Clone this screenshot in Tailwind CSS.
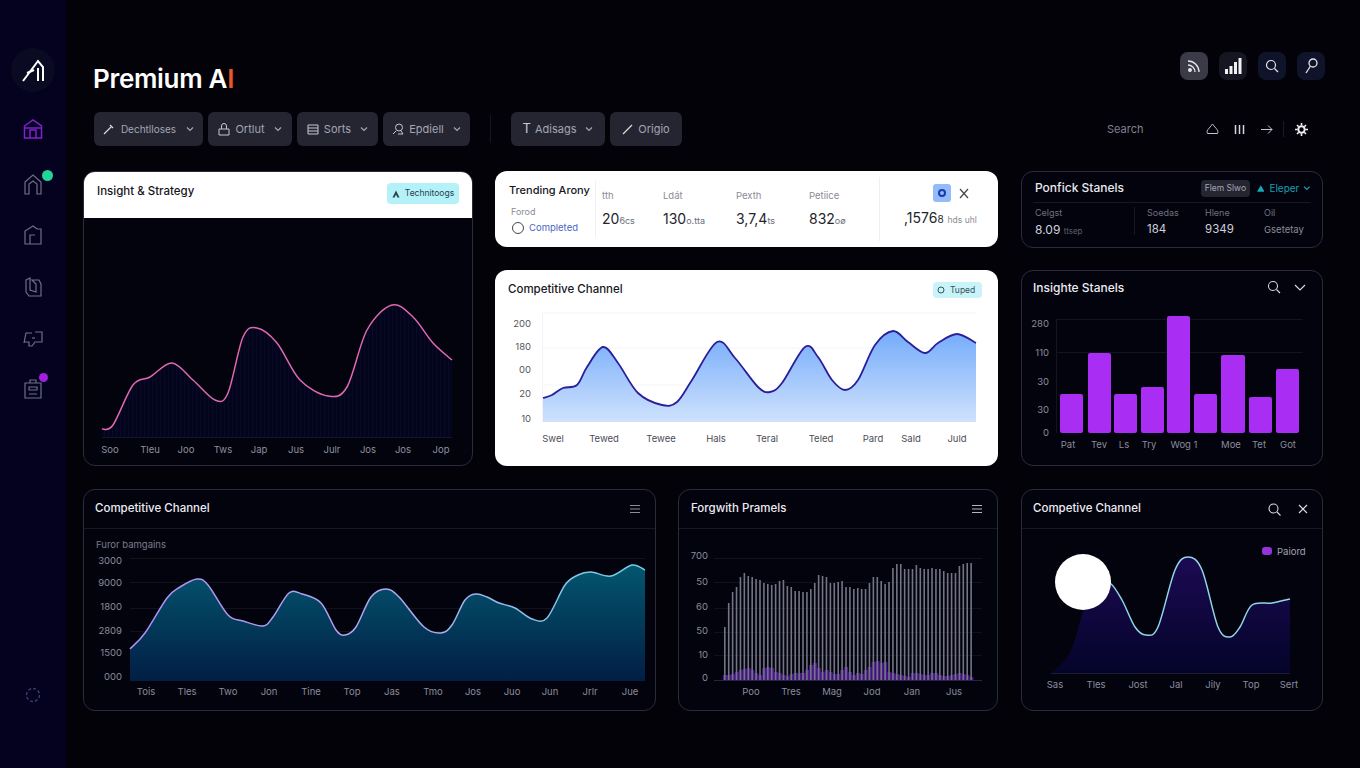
<!DOCTYPE html>
<html lang="en">
<head>
<meta charset="UTF-8">
<title>Premium AI</title>
<script src="https://cdn.jsdelivr.net/npm/@tailwindcss/browser@4"></script>
</head>
<body class="bg-[#020208] text-white [font-family:Inter,sans-serif] overflow-hidden">
<div class="flex h-[768px] w-[1360px]">

  <!-- Sidebar -->
  <aside class="w-[66px] shrink-0 h-full bg-[#04021f] flex flex-col items-center pt-[48px]">
    <div class="w-[44px] h-[44px] rounded-full bg-[#0a0a22] flex items-center justify-center">
      <svg class="w-[22px] h-[23px]" viewBox="0 0 22 23" fill="none" stroke="#fff" stroke-width="2"><path d="M1 22 L16 2 L21 8 V22"/><path d="M5 14 L12 11"/><path d="M16 9 V22"/></svg>
    </div>
    <svg class="w-[20px] h-[22px] mt-[26px]" viewBox="0 0 20 22" fill="none" stroke="#7e22ce" stroke-width="1.5"><path d="M1.5 8 L10 2 L18.500 8 V20 H1.500 Z"/><path d="M1.500 10 H18.500"/><path d="M7 20 V12 H13 V20"/></svg>
    <div class="relative mt-[33px]">
      <svg class="w-[20px] h-[22px] block" viewBox="0 0 20 22" fill="none" stroke="#6f7088" stroke-width="1.2"><path d="M2 21 V9 L10 2 L18 9 V21 H14 V11 L10 8 L6 11 V21 Z"/></svg>
      <span class="absolute -top-[3px] -right-[10px] w-[11px] h-[11px] rounded-full bg-[#22d39a]"></span>
    </div>
    <svg class="w-[20px] h-[22px] mt-[29px]" viewBox="0 0 20 22" fill="none" stroke="#6f7088" stroke-width="1.2"><path d="M2 20 V7 L10 2 L14 5 H18 V20 Z"/><path d="M7 20 V11 H12"/></svg>
    <svg class="w-[20px] h-[22px] mt-[30px]" viewBox="0 0 20 22" fill="none" stroke="#6f7088" stroke-width="1.2"><path d="M3 4 L7 2 V14 L13 16 V8 L9 4 H16 L18 8 V20 H6 L3 16 Z"/></svg>
    <svg class="w-[20px] h-[22px] mt-[29px]" viewBox="0 0 20 22" fill="none" stroke="#6f7088" stroke-width="1.2"><path d="M1 16 L3 6 H9 M12 5 H19 V15 H12 L9 19 H6 V15 H1"/><path d="M9 11 H12"/></svg>
    <div class="relative mt-[28px]">
      <svg class="w-[20px] h-[22px] block" viewBox="0 0 20 22" fill="none" stroke="#6f7088" stroke-width="1.2"><path d="M2 6 H18 V21 H2 Z"/><path d="M7 6 V3 H13 V6 M6 10 H14 V13 H6 Z M6 17 H14"/></svg>
      <span class="absolute -top-[4px] -right-[5px] w-[9px] h-[9px] rounded-full bg-[#a21fe0]"></span>
    </div>
    <svg class="w-[16px] h-[16px] mt-auto mb-[65px]" viewBox="0 0 16 16" fill="none" stroke="#3b3f6b" stroke-width="1.400" stroke-dasharray="3 2"><circle cx="8" cy="8" r="6.500"/></svg>
  </aside>

  <!-- Main -->
  <main class="flex-1 pl-[17px] pr-[35px] pt-[52px]">

    <!-- Title row -->
    <div class="flex justify-between items-start h-[36px]">
      <h1 class="ml-[10px] mt-[9px] text-[26px] leading-[36px] font-semibold tracking-[-0.3px]">Premium A<span class="text-[#e8562a]">I</span></h1>
      <div class="flex gap-[11px]">
        <div class="w-[28px] h-[28px] rounded-lg bg-[#3a3b47] flex items-center justify-center">
          <svg class="w-[14px] h-[14px]" viewBox="0 0 14 14" fill="none" stroke="#e4e4ea" stroke-width="1.300"><path d="M1 2 C7 2 12 7 12 13"/><path d="M1 6 C4.500 6 8 9 8 13"/><circle cx="3" cy="11" r="1.300" fill="#e4e4ea"/></svg>
        </div>
        <div class="w-[28px] h-[28px] rounded-lg bg-[#161622] flex items-center justify-center">
          <svg class="w-[17px] h-[16px]" viewBox="0 0 17 16" fill="#f1f1f4"><rect x="0" y="11" width="3" height="5"/><rect x="4.500" y="8" width="3" height="8"/><rect x="9" y="4" width="3" height="12"/><rect x="13.500" y="0" width="3" height="16"/></svg>
        </div>
        <div class="w-[28px] h-[28px] rounded-lg bg-[#10142a] flex items-center justify-center">
          <svg class="w-[14px] h-[14px]" viewBox="0 0 14 14" fill="none" stroke="#e4e4ea" stroke-width="1.200"><circle cx="6" cy="6" r="4.500"/><path d="M9.500 9.500 L13 13"/></svg>
        </div>
        <div class="w-[28px] h-[28px] rounded-lg bg-[#10142a] flex items-center justify-center">
          <svg class="w-[14px] h-[16px]" viewBox="0 0 14 16" fill="none" stroke="#e4e4ea" stroke-width="1.300"><circle cx="9" cy="5" r="4"/><path d="M6.500 8 L2 15"/></svg>
        </div>
      </div>
    </div>

    <!-- Toolbar -->
    <div class="flex items-center mt-[24px] h-[34px] ml-[11px] text-[11px] text-[#a4a5b2]">
      <button class="w-[109px] h-[34px] rounded-md bg-[#252532] flex items-center justify-center gap-[6px]">
        <svg class="w-[12px] h-[12px]" viewBox="0 0 12 12" fill="none" stroke="#d8d8e0" stroke-width="1.300"><path d="M1 11 L8 4"/><path d="M7 2 L10 5"/></svg><span class="text-[10px]">Dechtlloses</span>
        <svg class="w-[8px] h-[6px] ml-[4px]" viewBox="0 0 8 6" fill="none" stroke="#a4a5b2" stroke-width="1.200"><path d="M1 1.500 L4 4.500 L7 1.500"/></svg>
      </button>
      <button class="ml-[5px] w-[84px] h-[34px] rounded-md bg-[#252532] flex items-center justify-center gap-[5px]">
        <svg class="w-[12px] h-[13px]" viewBox="0 0 12 13" fill="none" stroke="#c8c8d2" stroke-width="1"><path d="M1 6 H11 V12 H1 Z"/><path d="M3.500 6 V3 A2.500 2.500 0 0 1 8.500 3 V6"/></svg>Ortlut
        <svg class="w-[8px] h-[6px] ml-[4px]" viewBox="0 0 8 6" fill="none" stroke="#a4a5b2" stroke-width="1.200"><path d="M1 1.500 L4 4.500 L7 1.500"/></svg>
      </button>
      <button class="ml-[5px] w-[81px] h-[34px] rounded-md bg-[#252532] flex items-center justify-center gap-[5px]">
        <svg class="w-[12px] h-[11px]" viewBox="0 0 12 11" fill="none" stroke="#c8c8d2" stroke-width="1"><path d="M1 1 H11 V10 H1 Z M1 4 H11 M1 7 H11"/></svg>Sorts
        <svg class="w-[8px] h-[6px] ml-[4px]" viewBox="0 0 8 6" fill="none" stroke="#a4a5b2" stroke-width="1.200"><path d="M1 1.500 L4 4.500 L7 1.500"/></svg>
      </button>
      <button class="ml-[5px] w-[87px] h-[34px] rounded-md bg-[#252532] flex items-center justify-center gap-[5px]">
        <svg class="w-[12px] h-[12px]" viewBox="0 0 12 12" fill="none" stroke="#c8c8d2" stroke-width="1"><circle cx="7" cy="4.500" r="3.500"/><path d="M1 11 L4 8 M9 8 L11 11 H6"/></svg>Epdiell
        <svg class="w-[8px] h-[6px] ml-[4px]" viewBox="0 0 8 6" fill="none" stroke="#a4a5b2" stroke-width="1.200"><path d="M1 1.500 L4 4.500 L7 1.500"/></svg>
      </button>
      <div class="ml-[20px] w-px h-[28px] bg-[#15151f]"></div>
      <button class="ml-[20px] w-[94px] h-[34px] rounded-md bg-[#252532] flex items-center justify-center gap-[4px]">
        <span class="text-[13px] text-[#c8c8d2]">T</span>Adisags
        <svg class="w-[8px] h-[6px] ml-[5px]" viewBox="0 0 8 6" fill="none" stroke="#a4a5b2" stroke-width="1.200"><path d="M1 1.500 L4 4.500 L7 1.500"/></svg>
      </button>
      <button class="ml-[5px] w-[72px] h-[34px] rounded-md bg-[#252532] flex items-center justify-center gap-[5px]">
        <svg class="w-[11px] h-[11px]" viewBox="0 0 11 11" fill="none" stroke="#d8d8e0" stroke-width="1.200"><path d="M1 10 L10 1"/></svg>Origio
      </button>
      <span class="ml-[425px] text-[#80818f]">Search</span>
      <svg class="ml-[62px] w-[13px] h-[12px]" viewBox="0 0 13 12" fill="none" stroke="#c5c6d0" stroke-width="1"><path d="M1.500 10.500 C0 7 3 6 6.500 1 C10 6 13 7 11.500 10.500 Z"/></svg>
      <svg class="ml-[15px] w-[11px] h-[11px]" viewBox="0 0 11 11" fill="none" stroke="#d4d5de" stroke-width="1.500"><path d="M1.500 1 V10 M5.500 1 V10 M9.500 1 V10"/></svg>
      <svg class="ml-[16px] w-[12px] h-[11px]" viewBox="0 0 12 11" fill="none" stroke="#c5c6d0" stroke-width="1"><path d="M0 5.500 H11 M7 1.500 L11 5.500 L7 9.500"/></svg>
      <div class="ml-[10px] w-px h-[16px] bg-[#1a1a26]"></div>
      <svg class="ml-[11px] w-[13px] h-[13px]" viewBox="0 0 13 13" fill="none" stroke="#eeeef2" stroke-width="2"><circle cx="6.500" cy="6.500" r="3.200"/><path d="M6.500 0 V2.500 M6.500 10.500 V13 M0 6.500 H2.500 M10.500 6.500 H13 M2 2 L3.700 3.700 M9.300 9.300 L11 11 M2 11 L3.700 9.300 M9.300 3.700 L11 2" stroke-width="1.600"/></svg>
    </div>

    <!-- Upper cards -->
    <div class="flex mt-[25px] h-[295px]">

      <section class="w-[390px] h-[295px] rounded-xl overflow-hidden border border-[#2b2c3a] bg-[#03030e]">
        <div class="h-[46px] bg-white flex items-start justify-between pl-[13px] pr-[13px]">
          <h2 class="mt-[11px] text-[11.500px] font-medium text-[#16161e]">Insight &amp; Strategy</h2>
          <span class="mt-[11px] w-[72px] h-[21px] rounded bg-[#b4f1f8] flex items-center justify-center gap-[5px] text-[8.500px] text-[#24434c]">
            <svg class="w-[8px] h-[8px]" viewBox="0 0 8 8" fill="#24434c"><path d="M4 0.500 L7.500 7.500 H5.500 L4 4.500 L2.500 7.500 H0.500 Z"/></svg>Technitoogs
          </span>
        </div>
        <svg class="block" width="388" height="247" viewBox="84 218 388 247">
          <defs>
            <pattern id="stripes" width="4" height="10" patternUnits="userSpaceOnUse"><rect width="4" height="10" fill="#04051a"/><rect width="1" height="10" fill="#090a2b"/></pattern>
          </defs>
          <path data-area="437" data-pts="102,429 113,425 133,385 150,377 172,363 193,380 215,400 228,393 243,337 257,328 277,343 300,380 328,396 347,387 367,330 392,305 413,317 433,343 452,360" fill="url(#stripes)"/>
          <path data-pts="102,429 113,425 133,385 150,377 172,363 193,380 215,400 228,393 243,337 257,328 277,343 300,380 328,396 347,387 367,330 392,305 413,317 433,343 452,360" fill="none" stroke="#de69ad" stroke-width="1.500"/>
          <path d="M102 437.500 H452" stroke="#15162a"/>
          <g class="fill-[#8f909e] text-[9.500px]" text-anchor="middle">
            <text x="110" y="453">Soo</text><text x="150" y="453">Tleu</text><text x="186" y="453">Joo</text><text x="223" y="453">Tws</text><text x="259" y="453">Jap</text><text x="296" y="453">Jus</text><text x="332" y="453">Julr</text><text x="368" y="453">Jos</text><text x="403" y="453">Jos</text><text x="441" y="453">Jop</text>
          </g>
        </svg>
      </section>

      <div class="ml-[22px] w-[503px] flex flex-col">
        <section class="h-[76px] rounded-xl bg-white flex text-[#24242e]">
          <div class="w-[101px] pl-[14px] border-r border-[#f0f0f4] my-[10px]">
            <h2 class="text-[11px] leading-[16px] mt-[1px] font-medium text-[#16161e] whitespace-nowrap">Trending Arony</h2>
            <p class="mt-[9px] ml-[2px] text-[9px] leading-[10px] text-[#8a8b96]">Forod</p>
            <div class="flex items-center gap-[5px] ml-[3px] mt-[4px] text-[9.500px] text-[#4a66c4]">
              <span class="w-[12px] h-[12px] rounded-full border border-[#44444e]"></span>Completed
            </div>
          </div>
          <div class="w-[284px] flex pl-[6px] pt-[12px] border-r border-[#f0f0f4] my-[6px]">
            <div class="w-[61px]"><p class="text-[9.500px] text-[#8a8b96]">tth</p><p class="mt-[7px] text-[14px] leading-[18px]">20<span class="text-[9px] text-[#6c6d78]">6cs</span></p></div>
            <div class="w-[73px]"><p class="text-[9.500px] text-[#8a8b96]">Ldát</p><p class="mt-[7px] text-[14px] leading-[18px]">130<span class="text-[9px] text-[#6c6d78]">o.tta</span></p></div>
            <div class="w-[73px]"><p class="text-[9.500px] text-[#8a8b96]">Pexth</p><p class="mt-[7px] text-[14px] leading-[18px] whitespace-nowrap">3,7,4<span class="text-[9px] text-[#6c6d78]">ts</span></p></div>
            <div><p class="text-[9.500px] text-[#8a8b96]">Petiice</p><p class="mt-[7px] text-[14px] leading-[18px]">832<span class="text-[9px] text-[#6c6d78]">oø</span></p></div>
          </div>
          <div class="flex-1 relative pt-[13px] pl-[24px]">
            <div class="flex items-center ml-[29px] gap-[8px]">
              <span class="w-[18px] h-[18px] rounded-[3px] bg-[#93bbfa] flex items-center justify-center"><span class="w-[8px] h-[8px] rounded-full border-2 border-[#1d3aa8]"></span></span>
              <svg class="w-[10px] h-[11px]" viewBox="0 0 10 11" fill="none" stroke="#45454f" stroke-width="1.200"><path d="M1 1 L9 10 M9 1 L1 10"/></svg>
            </div>
            <p class="mt-[7px] text-[14px] leading-[18px] whitespace-nowrap">,1576<span class="text-[10px]">8</span> <span class="text-[8.500px] text-[#8a8b96]">hds uhl</span></p>
          </div>
        </section>
        <section class="mt-[23px] h-[196px] rounded-xl bg-white overflow-hidden">
          <svg class="block" width="503" height="196" viewBox="495 270 503 196">
            <defs>
              <linearGradient id="blueFill" x1="0" y1="0" x2="0" y2="1"><stop offset="0" stop-color="#74abfa"/><stop offset="1" stop-color="#cfe2fd"/></linearGradient>
            </defs>
            <text x="508" y="293" class="fill-[#17171f] text-[11.500px] font-medium">Competitive Channel</text>
            <rect x="933" y="282" width="49" height="16" rx="4" fill="#c9f3f8"/>
            <circle cx="941" cy="290" r="3" fill="none" stroke="#33555e"/>
            <text x="950" y="293" class="fill-[#33555e] text-[8.500px]">Tuped</text>
            <path d="M542 313 H976 M542 348 H976 M542 385 H976" stroke="#f3f4f7"/>
            <path d="M542.500 313 V422" stroke="#f3f4f7"/>
            <path data-area="422" data-pts="543,398 552,395 563,388 577,385 587,367 603,347 618,363 638,393 662,405 677,402 692,380 717,342 735,358 758,387 770,392 782,383 805,347 818,357 832,380 845,390 858,380 875,345 893,331 908,342 925,353 938,343 957,334 976,343" fill="url(#blueFill)"/>
            <path data-pts="543,398 552,395 563,388 577,385 587,367 603,347 618,363 638,393 662,405 677,402 692,380 717,342 735,358 758,387 770,392 782,383 805,347 818,357 832,380 845,390 858,380 875,345 893,331 908,342 925,353 938,343 957,334 976,343" fill="none" stroke="#2a1f9a" stroke-width="1.800"/>
            <g class="fill-[#55565f] text-[9.500px]" text-anchor="end">
              <text x="531" y="327">200</text><text x="531" y="350">180</text><text x="531" y="373">00</text><text x="531" y="397">20</text><text x="531" y="422">10</text>
            </g>
            <g class="fill-[#4c4d57] text-[9.500px]" text-anchor="middle">
              <text x="553" y="442">Swel</text><text x="604" y="442">Tewed</text><text x="661" y="442">Tewee</text><text x="716" y="442">Hals</text><text x="767" y="442">Teral</text><text x="821" y="442">Teled</text><text x="873" y="442">Pard</text><text x="911" y="442">Sald</text><text x="957" y="442">Juld</text>
            </g>
          </svg>
        </section>
      </div>

      <div class="ml-[23px] w-[302px] flex flex-col">
        <section class="h-[77px] rounded-xl border border-[#2b2c3a] bg-[#03030e]">
          <div class="h-[31px] mx-[11px] border-b border-[#171826] flex items-center pl-[2px] pt-[2px]">
            <h2 class="w-[88px] text-[12px] font-medium text-[#e9e9ef] whitespace-nowrap">Ponfick Stanels</h2>
            <span class="ml-[78px] w-[51px] h-[17px] rounded bg-[#252532] text-[8.500px] text-[#a4a5b2] flex items-center justify-center">Flem Slwo</span>
            <svg class="ml-[7px] w-[8px] h-[7px]" viewBox="0 0 8 7" fill="#1aa6b8"><path d="M4 0 L8 7 H0 Z"/></svg>
            <span class="ml-[5px] text-[10px] text-[#1a9fb1]">Eleper</span>
            <svg class="ml-[4px] w-[8px] h-[6px]" viewBox="0 0 8 6" fill="none" stroke="#1a9fb1" stroke-width="1.200"><path d="M1 1.500 L4 4.500 L7 1.500"/></svg>
          </div>
          <div class="flex mt-[4px] ml-[13px] text-[#d0d1da]">
            <div class="w-[100px] border-r border-[#171826] h-[28px]"><p class="text-[9px] leading-[11px] text-[#70717e]">Celgst</p><p class="mt-[4px] text-[12px] leading-[15px]">8.09 <span class="text-[8px] text-[#5f606c]">ttsep</span></p></div>
            <div class="w-[70px] pl-[12px]"><p class="text-[9px] leading-[11px] text-[#70717e]">Soedas</p><p class="mt-[4px] text-[11.500px] leading-[15px]">184</p></div>
            <div class="w-[59px]"><p class="text-[9px] leading-[11px] text-[#70717e]">Hlene</p><p class="mt-[4px] text-[11.500px] leading-[15px]">9349</p></div>
            <div><p class="text-[9px] leading-[11px] text-[#70717e]">Oil</p><p class="mt-[4px] text-[9.500px] leading-[15px] text-[#8b8c98]">Gsetetay</p></div>
          </div>
        </section>
        <section class="mt-[22px] h-[196px] rounded-xl border border-[#2b2c3a] bg-[#03030e] overflow-hidden">
          <svg class="block" width="300" height="194" viewBox="1022 271 300 194">
            <text x="1033" y="292" class="fill-[#ececf2] text-[12px] font-medium">Insighte Stanels</text>
            <circle cx="1273" cy="286" r="4.500" fill="none" stroke="#d8d8e0" stroke-width="1.100"/><path d="M1276.500 289.500 L1280 293" stroke="#d8d8e0" stroke-width="1.100"/>
            <path d="M1295 285 L1300 290 L1305 285" fill="none" stroke="#d8d8e0" stroke-width="1.100"/>
            <path d="M1057 319.500 H1303 M1057 352.500 H1303" stroke="#14141f"/>
            <path d="M1056.500 319 V433" stroke="#14141f"/>
            <g fill="#a92df2">
              <rect x="1060" y="394" width="23" height="39" rx="2"/><rect x="1088" y="353" width="23" height="80" rx="2"/><rect x="1114" y="394" width="23" height="39" rx="2"/><rect x="1141" y="387" width="23" height="46" rx="2"/><rect x="1167" y="316" width="23" height="117" rx="2"/><rect x="1194" y="394" width="23" height="39" rx="2"/><rect x="1221" y="355" width="24" height="78" rx="2"/><rect x="1249" y="397" width="23" height="36" rx="2"/><rect x="1276" y="369" width="23" height="64" rx="2"/>
            </g>
            <g class="fill-[#8b8c9a] text-[9.500px]" text-anchor="end">
              <text x="1049" y="327">280</text><text x="1049" y="356">110</text><text x="1049" y="385">30</text><text x="1049" y="413">30</text><text x="1049" y="436">0</text>
            </g>
            <g class="fill-[#8b8c9a] text-[9.500px]" text-anchor="middle">
              <text x="1068" y="448">Pat</text><text x="1099" y="448">Tev</text><text x="1124" y="448">Ls</text><text x="1149" y="448">Try</text><text x="1184" y="448">Wog 1</text><text x="1231" y="448">Moe</text><text x="1259" y="448">Tet</text><text x="1288" y="448">Got</text>
            </g>
          </svg>
        </section>
      </div>
    </div>

    <!-- Lower cards -->
    <div class="flex mt-[23px] h-[222px]">
      <section class="w-[573px] h-[222px] rounded-xl border border-[#2b2c3a] bg-[#03030e] overflow-hidden">
        <div class="h-[39px] border-b border-[#171826] flex items-center justify-between pl-[11px] pr-[15px]">
          <h2 class="text-[11.500px] font-medium text-[#ececf2]">Competitive Channel</h2>
          <svg class="w-[10px] h-[10px]" viewBox="0 0 10 10" stroke="#8b8c9a"><path d="M0 1.500 H10 M0 5 H10 M0 8.500 H10"/></svg>
        </div>
        <svg class="block" width="571" height="181" viewBox="84 529 571 181">
          <defs>
            <linearGradient id="tealFill" x1="0" y1="0" x2="0" y2="1"><stop offset="0" stop-color="#03566f"/><stop offset="1" stop-color="#021e45"/></linearGradient>
            <linearGradient id="tealLine" gradientUnits="userSpaceOnUse" x1="130" y1="0" x2="645" y2="0"><stop offset="0" stop-color="#b08cf5"/><stop offset="0.5" stop-color="#b3a8ee"/><stop offset="1" stop-color="#6fd0e4"/></linearGradient>
          </defs>
          <text x="96" y="548" class="fill-[#7b7c8a] text-[9.500px]">Furor bamgains</text>
          <path d="M130 558.500 H645 M130 582.500 H645 M130 608.500 H645 M130 631.500 H645 M130 655.500 H645" stroke="#12121f"/>
          <path data-area="681" data-pts="130,649 145,633 167,598 180,587 197,579 208,585 228,615 243,621 263,626 273,617 289,593 302,594 321,603 336,630 345,635 356,627 371,597 386,589 399,597 424,627 441,633 452,625 465,600 476,594 487,597 499,603 515,608 532,619 547,618 565,585 578,575 591,572 611,576 632,565 645,570" fill="url(#tealFill)"/>
          <path data-pts="130,649 145,633 167,598 180,587 197,579 208,585 228,615 243,621 263,626 273,617 289,593 302,594 321,603 336,630 345,635 356,627 371,597 386,589 399,597 424,627 441,633 452,625 465,600 476,594 487,597 499,603 515,608 532,619 547,618 565,585 578,575 591,572 611,576 632,565 645,570" fill="none" stroke="url(#tealLine)" stroke-width="1.500"/>
          <g class="fill-[#8b8c9a] text-[9.500px]" text-anchor="end">
            <text x="122" y="564">3000</text><text x="122" y="586">9000</text><text x="122" y="610">1800</text><text x="122" y="634">2809</text><text x="122" y="656">1500</text><text x="122" y="680">000</text>
          </g>
          <g class="fill-[#8b8c9a] text-[9.500px]" text-anchor="middle">
            <text x="146" y="695">Tois</text><text x="187" y="695">Tles</text><text x="228" y="695">Two</text><text x="269" y="695">Jon</text><text x="311" y="695">Tine</text><text x="352" y="695">Top</text><text x="392" y="695">Jas</text><text x="433" y="695">Tmo</text><text x="473" y="695">Jos</text><text x="512" y="695">Juo</text><text x="550" y="695">Jun</text><text x="590" y="695">Jrlr</text><text x="630" y="695">Jue</text>
          </g>
        </svg>
      </section>

      <section class="ml-[22px] w-[320px] h-[222px] rounded-xl border border-[#2b2c3a] bg-[#03030e] overflow-hidden">
        <div class="h-[39px] border-b border-[#171826] flex items-center justify-between pl-[12px] pr-[15px]">
          <h2 class="text-[11.500px] font-medium text-[#ececf2]">Forgwith Pramels</h2>
          <svg class="w-[10px] h-[10px]" viewBox="0 0 10 10" stroke="#b4b5c0"><path d="M0 1.500 H10 M0 5 H10 M0 8.500 H10"/></svg>
        </div>
        <svg class="block" width="318" height="181" viewBox="679 529 318 181">
          <path d="M714 558.500 H982 M714 582.500 H982 M714 608.500 H982 M714 632.500 H982 M714 655.500 H982" stroke="#12121f"/>
          <g id="lowBars" fill="#4c1a8c"></g>
          <g id="highBars" fill="#737485"></g>
          <path d="M714 680.500 H982" stroke="#2a2245"/>
          <g class="fill-[#8b8c9a] text-[9.500px]" text-anchor="end">
            <text x="708" y="559">700</text><text x="708" y="585">50</text><text x="708" y="610">60</text><text x="708" y="634">50</text><text x="708" y="658">10</text><text x="708" y="681">0</text>
          </g>
          <g class="fill-[#8b8c9a] text-[9.500px]" text-anchor="middle">
            <text x="751" y="695">Poo</text><text x="791" y="695">Tres</text><text x="832" y="695">Mag</text><text x="872" y="695">Jod</text><text x="912" y="695">Jan</text><text x="954" y="695">Jus</text>
          </g>
        </svg>
      </section>

      <section class="ml-[23px] w-[302px] h-[222px] rounded-xl border border-[#2b2c3a] bg-[#03030e] overflow-hidden">
        <div class="h-[39px] border-b border-[#171826] flex items-center justify-between pl-[11px] pr-[14px]">
          <h2 class="text-[11.500px] font-medium text-[#ececf2]">Competive Channel</h2>
          <div class="flex items-center gap-[17px]">
            <svg class="w-[13px] h-[13px]" viewBox="0 0 13 13" fill="none" stroke="#d8d8e0" stroke-width="1.100"><circle cx="5.500" cy="5.500" r="4.500"/><path d="M9 9 L12.500 12.500"/></svg>
            <svg class="w-[10px] h-[10px]" viewBox="0 0 10 10" fill="none" stroke="#d8d8e0" stroke-width="1.200"><path d="M1 1 L9 9 M9 1 L1 9"/></svg>
          </div>
        </div>
        <svg class="block" width="300" height="181" viewBox="1022 529 300 181">
          <defs>
            <linearGradient id="violetFill" x1="0" y1="0" x2="0" y2="1"><stop offset="0" stop-color="#1c0a52"/><stop offset="1" stop-color="#04042a"/></linearGradient>
          </defs>
          <rect x="1262" y="547" width="10" height="8" rx="3" fill="#9333d8"/>
          <text x="1277" y="554.500" class="fill-[#a4a5b2] text-[9.500px]">Paiord</text>
          <path data-area="673" data-pts="1051,673 1070,653 1083,612 1095,580 1110,583 1122,600 1135,627 1146,635 1158,627 1175,570 1188,557 1202,570 1218,627 1230,637 1240,627 1252,605 1272,603 1290,599" fill="url(#violetFill)"/>
          <path data-pts="1095,580 1110,583 1122,600 1135,627 1146,635 1158,627 1175,570 1188,557 1202,570 1218,627 1230,637 1240,627 1252,605 1272,603 1290,599" fill="none" stroke="#8fd6e6" stroke-width="1.500"/>
          <path d="M1051 673.500 H1290" stroke="#1b1b34"/>
          <circle cx="1083" cy="582" r="28" fill="#fff"/>
          <g class="fill-[#8b8c9a] text-[9.500px]" text-anchor="middle">
            <text x="1055" y="688">Sas</text><text x="1096" y="688">Tles</text><text x="1138" y="688">Jost</text><text x="1176" y="688">Jal</text><text x="1213" y="688">Jily</text><text x="1251" y="688">Top</text><text x="1289" y="688">Sert</text>
          </g>
        </svg>
      </section>
    </div>
  </main>
</div>

<script>
  // catmull-rom through the points, as cubic beziers
  function smooth(pts) {
    let d = "M" + pts[0].join(" ");
    for (let i = 0; i < pts.length - 1; i++) {
      const p0 = pts[i - 1] || pts[i], p1 = pts[i], p2 = pts[i + 1], p3 = pts[i + 2] || p2;
      const c1 = [p1[0] + (p2[0] - p0[0]) / 6, p1[1] + (p2[1] - p0[1]) / 6];
      const c2 = [p2[0] - (p3[0] - p1[0]) / 6, p2[1] - (p3[1] - p1[1]) / 6];
      d += ` C${c1.join(" ")} ${c2.join(" ")} ${p2.join(" ")}`;
    }
    return d;
  }
  document.querySelectorAll("[data-pts]").forEach(el => {
    const pts = el.dataset.pts.split(" ").map(p => p.split(",").map(Number));
    let d = smooth(pts);
    if (el.dataset.area) d += ` L${pts[pts.length - 1][0]} ${el.dataset.area} L${pts[0][0]} ${el.dataset.area} Z`;
    el.setAttribute("d", d);
  });

  // tops of the bars in the Forgwith chart, in page pixels
  const high = [627,603,592,587,577,573,576,577,579,580,583,584,585,584,581,580,586,587,591,591,592,592,589,583,575,576,577,583,583,582,581,587,587,589,588,589,589,583,577,577,581,584,582,568,564,564,569,569,569,565,568,569,569,568,569,569,571,573,573,573,566,564,563,563];
  const low = [675,675,674,672,670,669,668,670,673,675,668,667,668,672,673,675,676,674,673,673,673,670,665,663,668,672,670,672,674,674,670,667,672,675,673,674,670,667,662,661,663,662,672,673,674,675,676,677,673,673,674,675,675,673,673,675,676,676,675,674,673,674,675,677];
  const NS = "http://www.w3.org/2000/svg";
  function bar(parent, x, y, w) {
    const r = document.createElementNS(NS, "rect");
    r.setAttribute("x", x); r.setAttribute("y", y); r.setAttribute("width", w); r.setAttribute("height", 680 - y);
    parent.appendChild(r);
  }
  high.forEach((top, i) => {
    const x = 724 + i * 3.91;
    bar(document.getElementById("lowBars"), x - 1, low[i], 4);
    bar(document.getElementById("highBars"), x, top, 1.6);
  });
</script>
</body>
</html>
